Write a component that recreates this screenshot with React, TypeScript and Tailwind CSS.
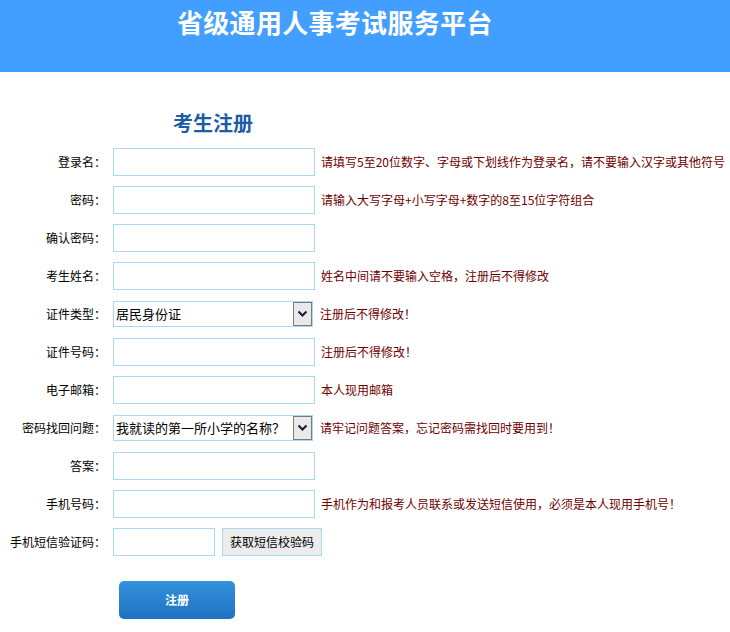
import { useState } from "react";

type Row = {
  label: string;
  kind: "text" | "select" | "sms";
  hint?: string;
  options?: string[];
  hintClass?: string;
};

const rows: Row[] = [
  {
    label: "登录名：",
    kind: "text",
    hint: "请填写5至20位数字、字母或下划线作为登录名，请不要输入汉字或其他符号",
  },
  { label: "密码：", kind: "text", hint: "请输入大写字母+小写字母+数字的8至15位字符组合" },
  { label: "确认密码：", kind: "text" },
  { label: "考生姓名：", kind: "text", hint: "姓名中间请不要输入空格，注册后不得修改" },
  {
    label: "证件类型：",
    kind: "select",
    options: ["居民身份证"],
    hint: "注册后不得修改！",
  },
  { label: "证件号码：", kind: "text", hint: "注册后不得修改！" },
  { label: "电子邮箱：", kind: "text", hint: "本人现用邮箱" },
  {
    label: "密码找回问题：",
    kind: "select",
    options: ["我就读的第一所小学的名称？"],
    hint: "请牢记问题答案，忘记密码需找回时要用到！",
    hintClass: "ml-[3px]",
  },
  { label: "答案：", kind: "text" },
  {
    label: "手机号码：",
    kind: "text",
    hint: "手机作为和报考人员联系或发送短信使用，必须是本人现用手机号！",
  },
  { label: "手机短信验证码：", kind: "sms" },
];

function FakeSelect({ value }: { value: string }) {
  return (
    <div className="flex h-[26px] w-[200px] items-stretch border border-[#a6dbed] bg-white">
      <span className="flex flex-1 items-center truncate pl-[2px] text-[13px] text-black">
        {value}
      </span>
      <span className="flex w-[19px] items-center justify-center border border-[#7a7a7a] bg-[#e9e9e9]">
        <svg width="11" height="8" viewBox="0 0 11 8">
          <path d="M1.5 1.5 L5.5 5.5 L9.5 1.5" fill="none" stroke="#111a33" strokeWidth="2" />
        </svg>
      </span>
    </div>
  );
}

export default function App() {
  const [values, setValues] = useState<Record<string, string>>({});

  return (
    <div className="min-h-screen bg-white font-['Noto_Sans_CJK_SC',sans-serif] text-[12px] text-black">
      <header className="h-[72px] bg-[#429eff] pl-[177px] pt-[4px]">
        <h1 className="text-[26px] font-bold leading-[36px] tracking-[0.3px] text-white">
          省级通用人事考试服务平台
        </h1>
      </header>

      <h2 className="pl-[173px] pt-[36px] text-[20px] font-bold leading-[30px] text-[#1b5ca5]">
        考生注册
      </h2>

      <div className="mt-[10px] flex flex-col gap-[10px]">
        {rows.map((row) => (
          <div key={row.label} className="flex h-[28px] items-center">
            <label className="w-[106px] text-right leading-none">{row.label}</label>
            <div className="ml-[7px] flex items-center">
              {row.kind === "text" && (
                <input
                  className="h-[28px] w-[202px] border border-[#a6dbed] px-1 outline-none"
                  value={values[row.label] ?? ""}
                  onChange={(e) => setValues({ ...values, [row.label]: e.target.value })}
                />
              )}
              {row.kind === "select" && <FakeSelect value={row.options![0]} />}
              {row.kind === "sms" && (
                <>
                  <input
                    className="h-[28px] w-[102px] border border-[#a6dbed] px-1 outline-none"
                    value={values[row.label] ?? ""}
                    onChange={(e) => setValues({ ...values, [row.label]: e.target.value })}
                  />
                  <button className="ml-[7px] h-[28px] w-[100px] border border-[#a6dbed] bg-[#ececec] text-[12px] text-black">
                    获取短信校验码
                  </button>
                </>
              )}
            </div>
            {row.hint ? (
              <span
                className={
                  row.kind === "select"
                    ? `ml-[7px] text-[12px] text-[#6e0000] ${row.hintClass ?? ""}`
                    : "ml-[6px] text-[12px] text-[#6e0000]"
                }
              >
                {row.hint}
              </span>
            ) : null}
          </div>
        ))}
      </div>

      <div className="pl-[119px] pt-[25px]">
        <button className="h-[38px] w-[116px] rounded-[5px] bg-gradient-to-b from-[#3592dd] to-[#1d72c0] text-[12px] font-bold text-white">
          注册
        </button>
      </div>
    </div>
  );
}
